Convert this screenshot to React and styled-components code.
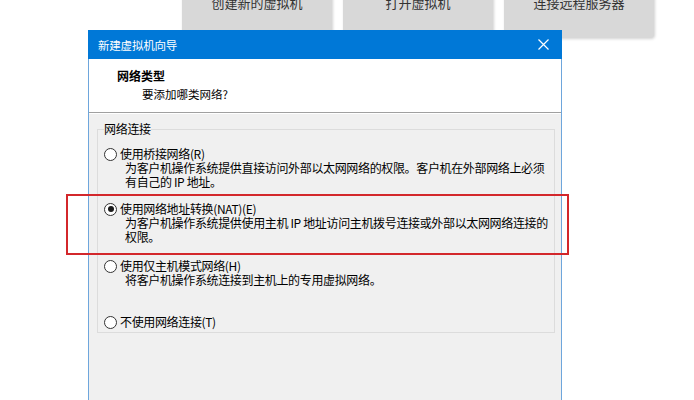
import React from 'react'
import styled, { createGlobalStyle } from 'styled-components'

const options = [
  {
    label: '使用桥接网络(R)',
    lines: ['为客户机操作系统提供直接访问外部以太网网络的权限。客户机在外部网络上必须', '有自己的 IP 地址。'],
    top: 11,
  },
  {
    label: '使用网络地址转换(NAT)(E)',
    lines: ['为客户机操作系统提供使用主机 IP 地址访问主机拨号连接或外部以太网网络连接的', '权限。'],
    top: 13,
    checked: true,
  },
  {
    label: '使用仅主机模式网络(H)',
    lines: ['将客户机操作系统连接到主机上的专用虚拟网络。'],
    top: 15,
  },
  {
    label: '不使用网络连接(T)',
    lines: [],
    top: 28,
  },
]

export default function App() {
  return (
    <>
      <GlobalStyle />
      <Page>
        <TopBar>
          <HomeButton>创建新的虚拟机</HomeButton>
          <HomeButton>打开虚拟机</HomeButton>
          <HomeButton>连接远程服务器</HomeButton>
        </TopBar>

        <Dialog>
          <TitleBar>
            <TitleText>新建虚拟机向导</TitleText>
            <CloseButton>
              <svg width="11" height="11" viewBox="0 0 11 11">
                <path d="M0.5 0.5 L10.5 10.5 M10.5 0.5 L0.5 10.5" stroke="#fff" strokeWidth="1.2" fill="none" />
              </svg>
            </CloseButton>
          </TitleBar>
          <Header>
            <HeaderTitle>网络类型</HeaderTitle>
            <HeaderSub>要添加哪类网络?</HeaderSub>
          </Header>
          <Body>
            <Group>
              <Legend>网络连接</Legend>
              {options.map((o) => (
                <Option key={o.label} $top={o.top}>
                  <OptionRow>
                    <Radio $checked={o.checked} />
                    <OptionLabel>{o.label}</OptionLabel>
                  </OptionRow>
                  {o.lines.map((l) => (
                    <Desc key={l}>{l}</Desc>
                  ))}
                </Option>
              ))}
            </Group>
          </Body>
        </Dialog>

        <Highlight />
      </Page>
    </>
  )
}

const GlobalStyle = createGlobalStyle`
  html, body {
    margin: 0;
    padding: 0;
    background: #ffffff;
    overflow: hidden;
    height: 400px;
  }
  body {
    font-family: "Noto Sans CJK SC", "Noto Sans", sans-serif;
  }
`

const Page = styled.div`
  position: relative;
  width: 694px;
  height: 400px;
  overflow: hidden;
`

const TopBar = styled.div`
  display: flex;
  gap: 11px;
  padding-left: 182px;
  margin-top: -22px;
`

const HomeButton = styled.div`
  width: 150px;
  height: 60px;
  box-sizing: border-box;
  padding-top: 17px;
  background: #d8d8d8;
  border-radius: 0 0 4px 4px;
  box-shadow: 1px 1px 3px rgba(0, 0, 0, 0.18);
  color: #333;
  font-size: 13px;
  line-height: 16px;
  text-align: center;
`

const Dialog = styled.div`
  position: absolute;
  left: 88px;
  top: 30px;
  width: 474px;
  height: 380px;
  box-sizing: border-box;
  border: 1px solid #6ea6dc;
  border-top: none;
  background: #f0f0f0;
  display: flex;
  flex-direction: column;
`

const TitleBar = styled.div`
  height: 29px;
  margin: 0 -1px;
  background: #0078d7;
  display: flex;
  align-items: center;
  justify-content: space-between;
  padding: 0 10px 0 10px;
`

const TitleText = styled.span`
  color: #fff;
  font-size: 11.5px;
  letter-spacing: -0.2px;
  line-height: 14px;
`

const CloseButton = styled.span`
  display: flex;
  align-items: center;
  margin-right: 3px;
`

const Header = styled.div`
  background: #fff;
  height: 54px;
  box-sizing: border-box;
  padding: 9px 0 0 28px;
  border-bottom: 1px solid #a0a0a0;
  box-shadow: 0 1px 0 #ffffff;
`

const HeaderTitle = styled.div`
  font-size: 12px;
  font-weight: 700;
  line-height: 16px;
  color: #000;
`

const HeaderSub = styled.div`
  font-size: 11.5px;
  line-height: 16px;
  padding-left: 25px;
  margin-top: 2px;
  color: #000;
`

const Body = styled.div`
  flex: 1;
  padding: 9px 8px 0 8px;
`

const Group = styled.fieldset`
  margin: 0;
  padding: 0 6px 10px 6px;
  border: 1px solid #dcdcdc;
  height: 211px;
  box-sizing: border-box;
`

const Legend = styled.legend`
  padding: 0;
  font-size: 12px;
  line-height: 14px;
  letter-spacing: -0.3px;
  color: #000;
`

const Option = styled.div`
  margin-top: ${(p) => p.$top}px;
  font-size: 12px;
  line-height: 14px;
  letter-spacing: -0.35px;
  color: #000;
`

const OptionRow = styled.div`
  display: flex;
  align-items: center;
  gap: 3px;
`

const Radio = styled.span`
  width: 13px;
  height: 13px;
  box-sizing: border-box;
  border-radius: 50%;
  border: 1px solid #333;
  background: #fff;
  position: relative;
  flex: none;
  &::after {
    content: '';
    display: ${(p) => (p.$checked ? 'block' : 'none')};
    position: absolute;
    left: 2.5px;
    top: 2.5px;
    width: 6px;
    height: 6px;
    border-radius: 50%;
    background: #1a1a1a;
  }
`

const OptionLabel = styled.span`
  white-space: nowrap;
`

const Desc = styled.div`
  padding-left: 21px;
  white-space: nowrap;
`

const Highlight = styled.div`
  position: absolute;
  left: 66px;
  top: 194px;
  width: 503px;
  height: 61px;
  box-sizing: border-box;
  border: 2px solid #d3272b;
  pointer-events: none;
`
